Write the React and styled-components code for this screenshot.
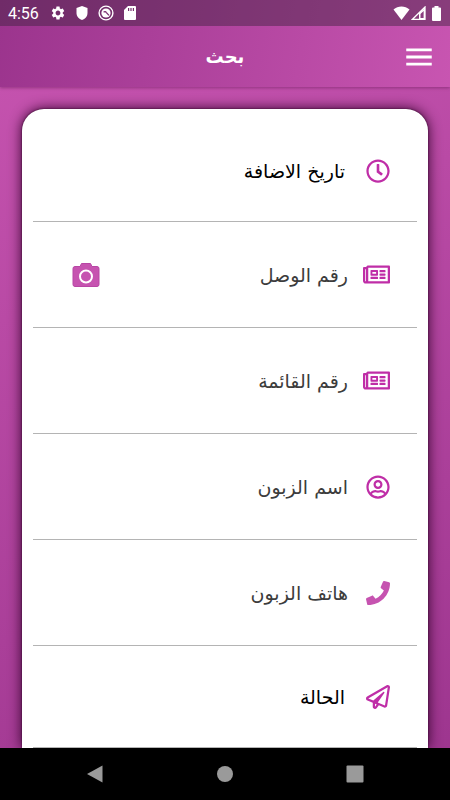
import styled, { createGlobalStyle } from "styled-components";
import {
  FaPhone,
  FaRegClock,
  FaRegNewspaper,
  FaRegPaperPlane,
  FaRegUserCircle,
} from "react-icons/fa";
import { MdMenu, MdSettings } from "react-icons/md";

const GlobalStyle = createGlobalStyle`
  * {
    box-sizing: border-box;
  }

  body {
    margin: 0;
    font-family: "DejaVu Sans", sans-serif;
  }

  button,
  input {
    border: 0;
    padding: 0;
    background: none;
    font: inherit;
  }
`;

const Screen = styled.div`
  display: flex;
  flex-direction: column;
  height: 100vh;
  overflow: hidden;
  background: linear-gradient(160deg, #c855b1 0%, #9b348d 100%);
`;

const TopBar = styled.header`
  flex: none;
  z-index: 1;
  background: linear-gradient(100deg, #9b348d 0%, #c855b1 100%);
  box-shadow: 0 1px 3px rgba(60, 0, 50, 0.35);
`;

const StatusBar = styled.div`
  display: flex;
  align-items: center;
  justify-content: space-between;
  height: 26px;
  padding: 0 5px 0 8px;
  background: rgba(60, 34, 60, 0.45);
  color: #fff;
  font-family: Roboto, sans-serif;
  font-size: 16px;
`;

const StatusGroup = styled.div`
  display: flex;
  align-items: center;
  gap: ${(props) => props.$gap};

  svg {
    display: block;
  }
`;

const Clock = styled.span`
  margin-right: 3px;
`;

const TitleBar = styled.div`
  display: grid;
  grid-template-columns: 34px 1fr 34px;
  align-items: center;
  height: 61px;
  padding: 0 14px;
  color: #fff;
`;

const Title = styled.h1`
  grid-column: 2;
  margin: 0;
  font-size: 18px;
  font-weight: 700;
  text-align: center;
`;

const MenuButton = styled.button`
  display: flex;
  color: #fff;
  cursor: pointer;
`;

const Content = styled.main`
  flex: 1;
  min-height: 0;
  overflow: hidden;
  padding: 22px 22px 0;
`;

const Card = styled.form`
  min-height: 100%;
  padding: 11px 11px 0;
  border-radius: 22px 22px 0 0;
  background: #fff;
  box-shadow: 0 0 2px #300028, 0 0 13px #300028;
`;

const Row = styled.div`
  display: flex;
  align-items: center;
  height: ${(props) => (props.$picker ? "102px" : "106px")};
  padding: 0 27px 0 39px;
  border-bottom: 1px solid #b4b4b4;
`;

const RowIcon = styled.label`
  display: flex;
  justify-content: flex-start;
  width: 28px;
  color: #bf2ea7;
`;

const PickerButton = styled.button`
  flex: 1;
  margin-right: 17px;
  color: #000;
  font-size: 19px;
  text-align: right;
  cursor: pointer;
`;

const TextField = styled.input`
  flex: 1;
  min-width: 0;
  height: 40px;
  margin-right: 14px;
  color: #222;
  font-size: 19px;
  outline: none;

  &::placeholder {
    padding: 8px 0;
    color: #3c3c3c;
    opacity: 1;
  }
`;

const CameraButton = styled.button`
  display: flex;
  cursor: pointer;
`;

const NavBar = styled.nav`
  flex: none;
  display: flex;
  align-items: center;
  justify-content: space-around;
  height: 52px;
  padding: 0 30px;
  background: #000;
`;

const NavButton = styled.button`
  display: flex;
  cursor: pointer;
`;

const CameraIcon = () => (
  <svg width="28" height="26" viewBox="0 0 28 26">
    <path
      d="M3 4.500H8L9.500 1.500H18.500L20 4.500H25A2 2 0 0 1 27 6.500V22.500A2 2 0 0 1 25 24.500H3A2 2 0 0 1 1 22.500V6.500A2 2 0 0 1 3 4.500Z"
      fill="#c653b0"
      stroke="#b846a5"
    />
    <circle cx="14" cy="14.500" r="6" fill="none" stroke="#fff" strokeWidth="2" />
  </svg>
);

const fields = [
  { id: "date", label: "تاريخ الاضافة", icon: <FaRegClock size={24} />, picker: true },
  { id: "receipt", label: "رقم الوصل", icon: <FaRegNewspaper size={27} />, camera: true },
  { id: "list", label: "رقم القائمة", icon: <FaRegNewspaper size={27} /> },
  { id: "name", label: "اسم الزبون", icon: <FaRegUserCircle size={24} /> },
  { id: "phone", label: "هاتف الزبون", icon: <FaPhone size={24} color="#c653b0" /> },
  { id: "status", label: "الحالة", icon: <FaRegPaperPlane size={24} />, picker: true },
];

const Field = ({ id, label, icon, picker, camera }) => (
  <Row dir="rtl" $picker={picker}>
    <RowIcon htmlFor={id} aria-label={label}>
      {icon}
    </RowIcon>
    {picker ? (
      <PickerButton id={id} type="button">
        {label}
      </PickerButton>
    ) : (
      <TextField id={id} type="text" placeholder={label} />
    )}
    {camera && (
      <CameraButton type="button" aria-label="كاميرا">
        <CameraIcon />
      </CameraButton>
    )}
  </Row>
);

export default () => {
  return (
    <>
      <GlobalStyle />
      <Screen>
        <TopBar>
          <StatusBar>
            <StatusGroup $gap="8px">
              <Clock>4:56</Clock>
              <MdSettings size={16} />
              <svg width="16" height="16" viewBox="0 0 16 16" fill="#fff">
                <path d="M8 1 13.5 3V8C13.5 11.5 11 14 8 15 5 14 2.5 11.5 2.5 8V3Z" />
              </svg>
              <svg width="16" height="16" viewBox="0 0 16 16" fill="none" stroke="#fff">
                <circle cx="8" cy="8" r="6.9" strokeWidth="1.4" />
                <circle cx="8" cy="8" r="4.6" fill="#fff" stroke="none" />
                <path d="M5.6 7.2C6.6 6.4 7.6 6.6 8.4 7.6L11 10.4" stroke="#7a2f70" strokeWidth="1.3" />
              </svg>
              <svg width="16" height="16" viewBox="0 0 16 16">
                <path
                  fill="#fff"
                  fillRule="evenodd"
                  d="M6 1h7a1 1 0 0 1 1 1v12a1 1 0 0 1-1 1H3a1 1 0 0 1-1-1V5ZM6 3v3h1.2V3ZM8.4 3v3h1.2V3ZM10.8 3v3H12V3Z"
                />
              </svg>
            </StatusGroup>
            <StatusGroup $gap="1px">
              <svg width="17" height="14" viewBox="0 0 17 14" fill="#fff">
                <path d="M8.5 14 0.5 3.5C5 -0.5 12 -0.5 16.5 3.5Z" />
              </svg>
              <svg width="15" height="14" viewBox="0 0 15 14" fill="none" stroke="#fff">
                <path d="M1.5 13.3H14V1Z" strokeWidth="1.3" />
                <path d="M8 13V7L14 2V13Z" fill="#fff" stroke="none" />
                <path d="M9.5 12V8L12.6 5V12Z" fill="#8a3c7f" stroke="none" />
              </svg>
              <svg width="18" height="15" viewBox="0 0 18 15" fill="#fff">
                <path d="M7.5 0h4v1.5H13a1 1 0 0 1 1 1V14a1 1 0 0 1-1 1H6a1 1 0 0 1-1-1V2.500a1 1 0 0 1 1-1h1.5Z" />
              </svg>
            </StatusGroup>
          </StatusBar>
          <TitleBar>
            <Title lang="ar">بحث</Title>
            <MenuButton type="button" aria-label="القائمة">
              <MdMenu size={34} />
            </MenuButton>
          </TitleBar>
        </TopBar>
        <Content>
          <Card lang="ar">
            {fields.map((field) => (
              <Field key={field.id} {...field} />
            ))}
          </Card>
        </Content>
        <NavBar>
          <NavButton type="button" aria-label="Back">
            <svg width="18" height="18" viewBox="0 0 18 18" fill="#9a9a9a">
              <path d="M16.5 0.5V17.5L1 9Z" />
            </svg>
          </NavButton>
          <NavButton type="button" aria-label="Home">
            <svg width="18" height="18" viewBox="0 0 18 18" fill="#9a9a9a">
              <circle cx="9" cy="9" r="8" />
            </svg>
          </NavButton>
          <NavButton type="button" aria-label="Recents">
            <svg width="18" height="18" viewBox="0 0 18 18" fill="#9a9a9a">
              <rect x="0.5" y="0.5" width="17" height="17" rx="1" />
            </svg>
          </NavButton>
        </NavBar>
      </Screen>
    </>
  );
};
